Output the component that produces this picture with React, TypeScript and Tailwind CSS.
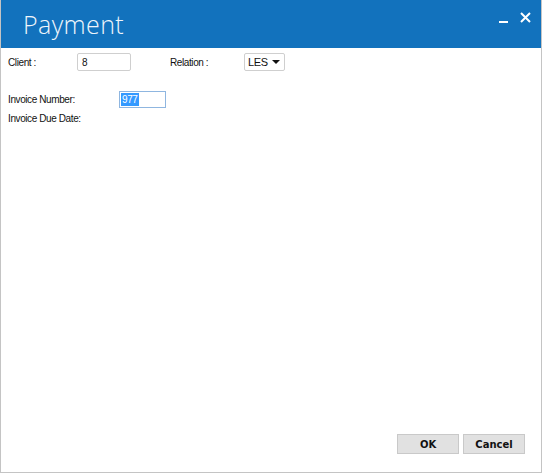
import React from "react";

const labelFont = { fontFamily: '"Liberation Sans", Arial, sans-serif' };

function Field({ children, className = "" }: { children: React.ReactNode; className?: string }) {
  return (
    <div className={`h-[18px] flex items-center bg-white border border-[#cfcfcf] rounded-[2px] ${className}`}>
      {children}
    </div>
  );
}

export default function App() {
  return (
    <div className="w-[542px] h-[473px] flex flex-col bg-white border-x border-b border-[#c4c4c4] text-[#111] select-none">
      {/* title bar */}
      <div className="h-[48px] shrink-0 bg-[#1272bd] flex items-start justify-between">
        <h1
          className="pl-[22px] pt-[8px] text-[25px] leading-[32px] font-light tracking-[0.4px] text-[#eef5fb]"
          style={{ fontFamily: '"Open Sans", "Noto Sans", sans-serif' }}
        >
          Payment
        </h1>
        <div className="flex items-start gap-[12px] pr-[10px] pt-[10px] text-white">
          <svg width="9" height="12" viewBox="0 0 9 12" className="mt-[2px]">
            <rect x="0" y="9" width="9" height="2" fill="currentColor" />
          </svg>
          <svg width="11" height="11" viewBox="0 0 11 11" className="mt-[2px]">
            <path d="M1 1 L10 10 M10 1 L1 10" stroke="currentColor" strokeWidth="2" />
          </svg>
        </div>
      </div>

      {/* form body */}
      <div className="flex-1 flex flex-col pl-[7px] text-[10px] tracking-[-0.4px]" style={labelFont}>
        <div className="mt-[5px] flex items-center">
          <span className="w-[69px]">Client :</span>
          <Field className="w-[54px] pl-[4px]">8</Field>
          <span className="ml-[39px] w-[74px]">Relation :</span>
          <Field className="w-[41px] pl-[3px] justify-between pr-[4px] text-[11px] tracking-[-0.3px]">
            <span>LES</span>
            <svg width="8" height="4" viewBox="0 0 8 4">
              <path d="M0 0 L8 0 L4 4 Z" fill="#111" />
            </svg>
          </Field>
        </div>

        <div className="mt-[20px] flex items-center">
          <span className="w-[111px]">Invoice Number:</span>
          <div className="h-[17px] w-[47px] flex items-center border border-[#8fb6e0] bg-white pl-[1px]">
            <span className="bg-[#3399ff] text-white px-[1px] leading-[13px]">977</span>
          </div>
        </div>

        <div className="mt-[2px] h-[16px] flex items-center">
          <span>Invoice Due Date:</span>
        </div>

        <div className="mt-auto mb-[18px] mr-[16px] flex justify-end gap-[4px]">
          {["OK", "Cancel"].map((t) => (
            <button
              key={t}
              className="w-[62px] h-[20px] bg-[#e1e1e1] border border-[#c9c9c9] text-[10px] font-bold tracking-normal text-[#111]"
              style={{ fontFamily: '"DejaVu Sans", Verdana, sans-serif' }}
            >
              {t}
            </button>
          ))}
        </div>
      </div>
    </div>
  );
}
